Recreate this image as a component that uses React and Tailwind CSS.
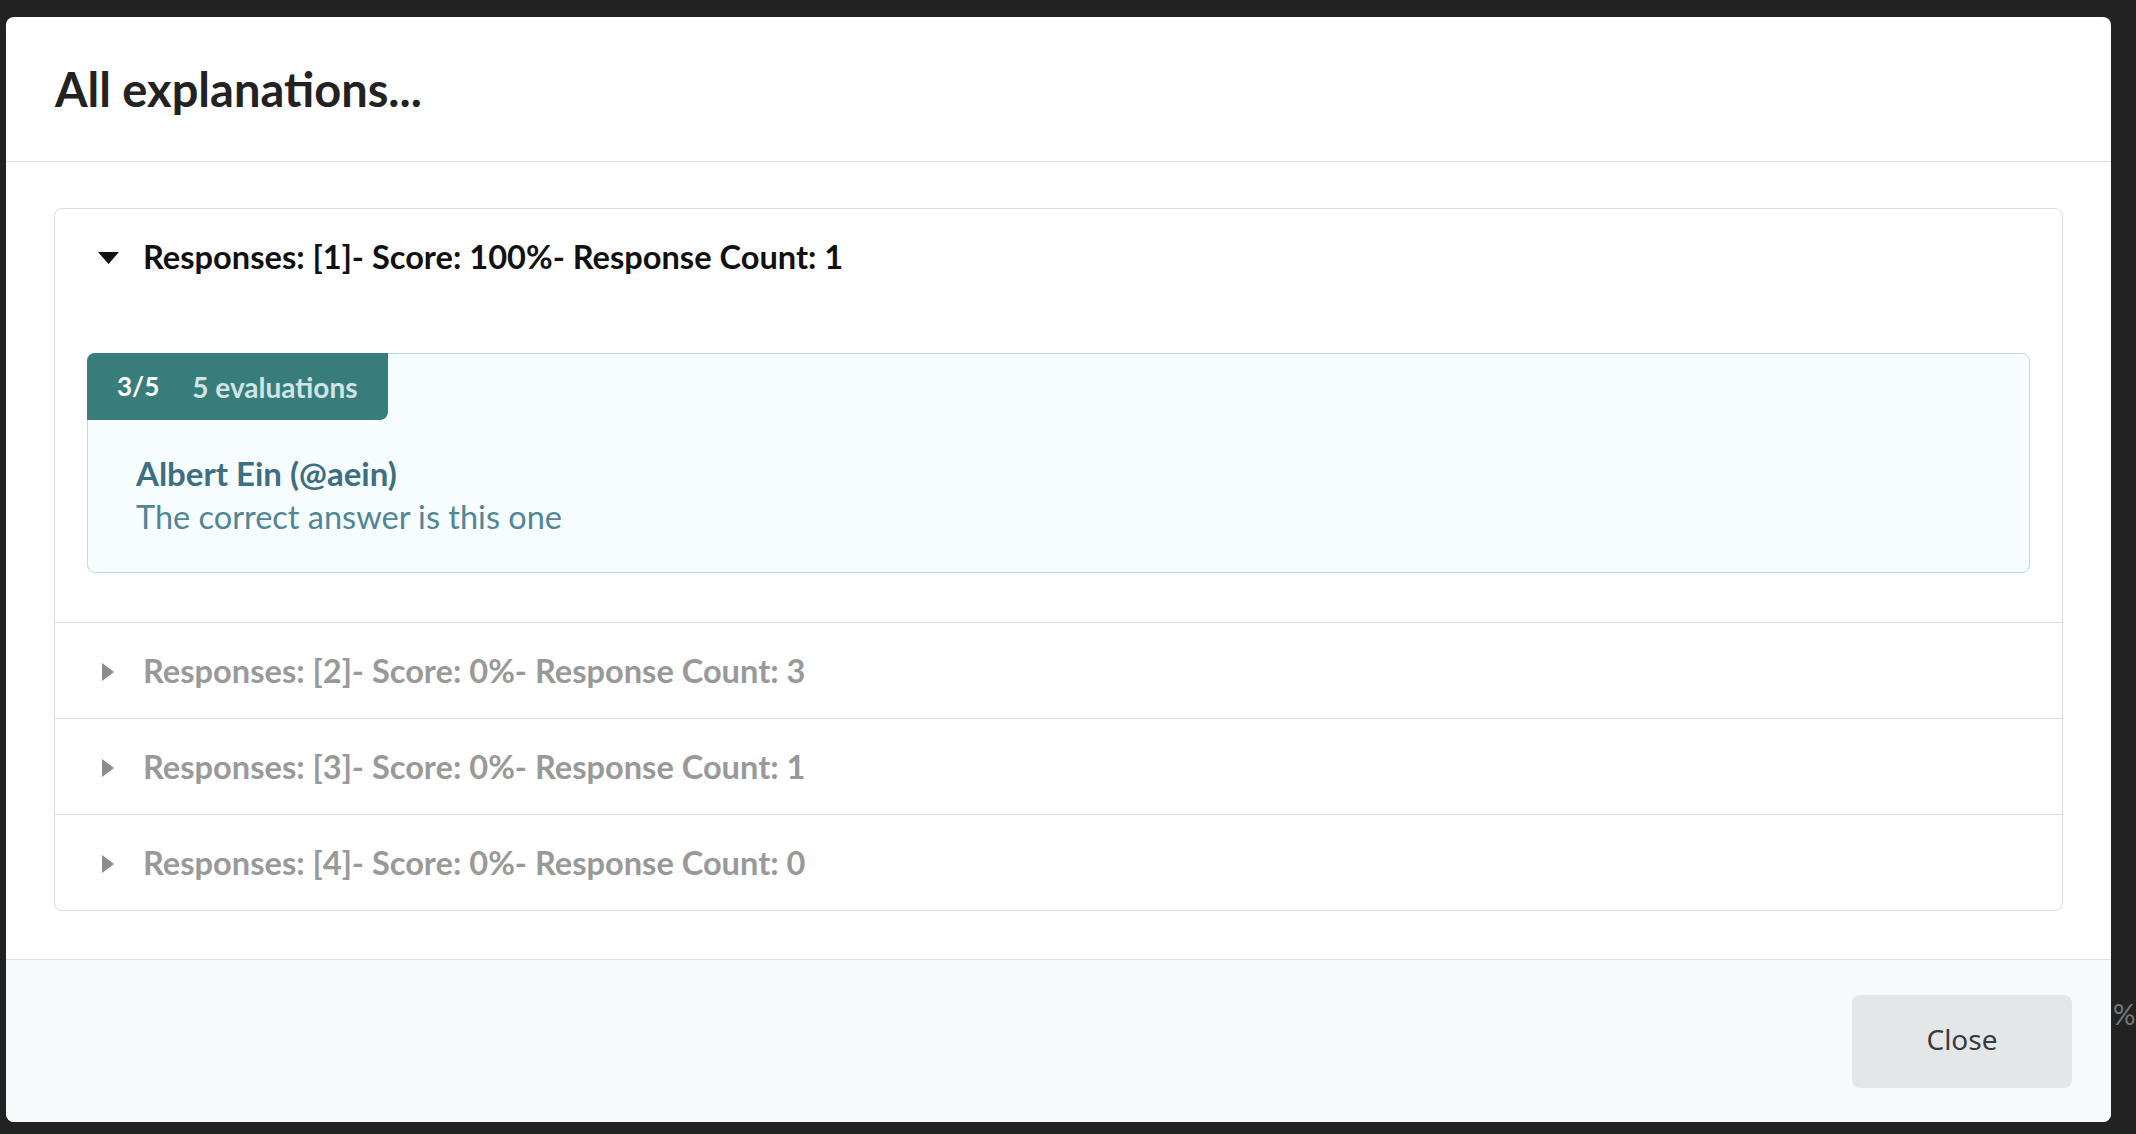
const rows = [
  { id: 1, score: "100%", count: 1, open: true },
  { id: 2, score: "0%", count: 3 },
  { id: 3, score: "0%", count: 1 },
  { id: 4, score: "0%", count: 0 },
];

function Caret({ open }) {
  if (open) {
    return (
      <svg width="21" height="12" viewBox="0 0 21 12" className="block">
        <polygon points="0,0 21,0 10.5,12" fill="#111" />
      </svg>
    );
  }
  return (
    <svg width="12" height="18" viewBox="0 0 12 18" className="block">
      <polygon points="0,0 12,9 0,18" fill="#8c8c8c" />
    </svg>
  );
}

function Explanation() {
  return (
    <div className="border border-[#b9dce4] bg-[#f7fdfe] rounded-lg">
      <div className="-mt-px -ml-px w-fit h-[67px] bg-[#387d7c] rounded-tl-lg rounded-br-lg flex items-center gap-[33px] pl-[30px] pr-[30px] font-bold whitespace-nowrap">
        <span className="text-white text-[26px]">3/5</span>
        <span className="text-[#cfe5e3] text-[28px]">5 evaluations</span>
      </div>
      <div className="pt-[31px] pb-[33px] px-12">
        <div className="text-[33px] leading-[44px] font-bold text-[#3b6f82]">Albert Ein (@aein)</div>
        <div className="text-[32.5px] leading-[44px] text-[#4f8698]">The correct answer is this one</div>
      </div>
    </div>
  );
}

export default function App() {
  return (
    <div className="relative h-screen bg-[#222] pt-[17px] pl-[6px] overflow-hidden font-['Lato',sans-serif]">
      <span className="absolute left-[2113px] top-[993px] text-[28px] text-[#777]">%</span>
      <div className="relative w-[2105px] h-[1105px] bg-white rounded-lg overflow-hidden flex flex-col">
        <div className="h-[145px] border-b border-[#dee2e6] px-[49px] flex items-center">
          <h2 className="text-[47px] font-bold text-[#222]">All explanations...</h2>
        </div>

        <div className="flex-1 px-12 pt-[46px] pb-12">
          <div className="border border-[#dcdcdc] rounded-lg">
            {rows.map((r, i) => (
              <div key={r.id} className={i > 0 ? "border-t border-[#dcdcdc]" : ""}>
                <div className="h-[95px] pl-[42px] pt-[2px] flex items-center">
                  <div className="w-[22px] flex justify-center">
                    <Caret open={r.open} />
                  </div>
                  <span className={`ml-[24px] text-[32.6px] font-bold ${r.open ? "text-[#111]" : "text-[#999]"}`}>
                    Responses: [{r.id}]- Score: {r.score}- Response Count: {r.count}
                  </span>
                </div>
                {r.open && (
                  <div className="px-8 pt-[49px] pb-[49px]">
                    <Explanation />
                  </div>
                )}
              </div>
            ))}
          </div>
        </div>

        <div className="h-[163px] border-t border-[#dee2e6] bg-[#f8f9fa] flex items-center justify-end pr-[39px]">
          <button className="w-[220px] h-[93px] pb-[4px] rounded-lg bg-[#e4e7ea] text-[28px] text-[#3a3a3a] font-['Noto_Sans',sans-serif]">
            Close
          </button>
        </div>
      </div>
    </div>
  );
}
